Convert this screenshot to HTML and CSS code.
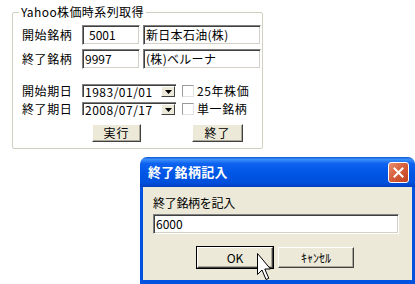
FILE: index.html
```html
<!DOCTYPE html>
<html lang="ja">
<head>
    <meta charset="UTF-8">
    <title>Yahoo株価時系列取得</title>
    <link rel="stylesheet" href="styles.css">
</head>
<body>
    <div class="desk">
        <fieldset class="group">
            <legend>Yahoo株価時系列取得</legend>
            <div class="inner">
                <div class="row code-row">
                    <span class="lbl">開始銘柄</span>
                    <span class="field code indent">5001</span>
                    <span class="field name">新日本石油(株)</span>
                </div>
                <div class="row code-row second">
                    <span class="lbl">終了銘柄</span>
                    <span class="field code">9997</span>
                    <span class="field name">(株)ベルーナ</span>
                </div>
                <div class="row date-row">
                    <span class="lbl">開始期日</span>
                    <span class="combo">
                        <span class="combo-text">1983/01/01</span>
                        <span class="combo-btn"><svg width="7" height="4" viewBox="0 0 7 4"><path d="M0 0H7L3.5 4Z" fill="#000"/></svg></span>
                    </span>
                    <span class="check"></span>
                    <span class="check-lbl">25年株価</span>
                </div>
                <div class="row date-row second-date">
                    <span class="lbl">終了期日</span>
                    <span class="combo">
                        <span class="combo-text">2008/07/17</span>
                        <span class="combo-btn"><svg width="7" height="4" viewBox="0 0 7 4"><path d="M0 0H7L3.5 4Z" fill="#000"/></svg></span>
                    </span>
                    <span class="check"></span>
                    <span class="check-lbl">単一銘柄</span>
                </div>
                <div class="btn-row">
                    <button class="btn form-btn">実行</button>
                    <button class="btn form-btn quit">終了</button>
                </div>
            </div>
        </fieldset>
    </div>

    <div class="dialog">
        <div class="titlebar">
            <span class="title">終了銘柄記入</span>
            <span class="close">
                <svg width="11" height="11" viewBox="0 0 11 11"><path d="M1.5 1.5L9.5 9.5M9.5 1.5L1.5 9.5" stroke="#fff" stroke-width="2" stroke-linecap="square"/></svg>
            </span>
        </div>
        <div class="dlg-body">
            <div class="prompt">終了銘柄を記入</div>
            <div class="field dlg-input">6000</div>
            <div class="dlg-btns">
                <button class="btn dlg-btn ok">OK</button>
                <button class="btn dlg-btn">ｷｬﾝｾﾙ</button>
            </div>
        </div>
    </div>

    <svg class="cursor" width="15" height="30" viewBox="0 0 15 30">
        <path d="M0.5 0.5V21.5L5 17L9 26.5L11.8 25.3L7.8 16H13.5Z" fill="#fff" stroke="#000" stroke-width="1" stroke-linejoin="miter"/>
    </svg>
</body>
</html>
```

FILE: styles.css
```css
body {
    margin: 0;
    background: #fff;
    font-family: "Noto Sans CJK JP", "DejaVu Sans", sans-serif;
    font-size: 12px;
    color: #000;
}
.desk {
    padding: 5px 0 0 12px;
}
.group {
    width: 249px;
    margin: 0;
    padding: 0;
    border: 1px solid #d0d0bf;
    border-radius: 2px;
}
.group legend {
    margin-left: 6px;
    padding: 0 2px;
    font-size: 12px;
    line-height: 14px;
    letter-spacing: 0.4px;
}
.inner {
    padding: 6px 0 6px 9px;
}
.row {
    display: flex;
    align-items: center;
}
.lbl {
    width: 60px;
    letter-spacing: 0.6px;
    line-height: 14px;
}
.code-row {
    height: 20px;
}
.code-row.second {
    margin-top: 4px;
}
.field {
    box-sizing: border-box;
    height: 20px;
    background: #fff;
    border: 1px solid;
    border-color: #808080 #fff #fff #808080;
    box-shadow: inset 1px 1px #404040, inset -1px -1px #d4d0c8;
    line-height: 18px;
    padding-left: 2px;
    white-space: nowrap;
    overflow: hidden;
}
.code {
    width: 58px;
    margin-right: 3px;
}
.indent {
    padding-left: 6px;
}
.name {
    width: 118px;
    letter-spacing: 0.3px;
}
.date-row {
    margin-top: 15px;
    height: 13px;
}
.date-row.second-date {
    margin-top: 5px;
}
.combo {
    box-sizing: border-box;
    width: 94px;
    height: 13px;
    display: flex;
    align-items: center;
    justify-content: space-between;
    background: #fff;
    border-top: 1px solid #808080;
    border-left: 1px solid #808080;
    box-shadow: inset 1px 1px #404040;
    padding: 1px 1px 0 2px;
}
.combo-text {
    line-height: 12px;
    font-size: 12px;
    letter-spacing: 0.5px;
}
.combo-btn {
    box-sizing: border-box;
    width: 14px;
    height: 11px;
    display: flex;
    align-items: center;
    justify-content: center;
    background: #ece9d8;
    border: 1px solid;
    border-color: #fff #404040 #404040 #fff;
}
.check {
    box-sizing: border-box;
    width: 12px;
    height: 12px;
    margin-left: 6px;
    background: #fff;
    border: 1px solid;
    border-color: #9a9a9a #e2e2e2 #e2e2e2 #9a9a9a;
}
.check-lbl {
    margin-left: 3px;
    letter-spacing: 0.6px;
    line-height: 14px;
}
.btn-row {
    display: flex;
    margin-top: 9px;
    padding-left: 70px;
}
.btn {
    box-sizing: border-box;
    font-family: "Noto Sans CJK JP", "DejaVu Sans", sans-serif;
    font-size: 12px;
    color: #000;
    background: #ece9d8;
    border: 1px solid;
    border-color: #fff #404040 #404040 #fff;
    box-shadow: inset -1px -1px #aca899;
    padding: 0;
    line-height: 14px;
}
.form-btn {
    width: 49px;
    height: 18px;
    letter-spacing: 1px;
}
.form-btn.quit {
    width: 51px;
    margin-left: 51px;
}

.dialog {
    position: absolute;
    left: 140px;
    top: 157px;
    width: 275px;
    height: 127px;
    display: flex;
    flex-direction: column;
}
.titlebar {
    height: 30px;
    display: flex;
    align-items: center;
    justify-content: space-between;
    padding: 0 6px 0 8px;
    border-radius: 7px 7px 0 0;
    background: linear-gradient(to bottom, #0a58d6 0%, #3d8ff9 8%, #0d63f0 22%, #0055e5 55%, #0050dc 85%, #003fc0 100%);
}
.title {
    color: #fff;
    font-weight: bold;
    font-size: 13px;
    line-height: 16px;
    letter-spacing: 0.3px;
}
.close {
    box-sizing: border-box;
    width: 21px;
    height: 21px;
    display: flex;
    align-items: center;
    justify-content: center;
    border: 1px solid #fff;
    border-radius: 3px;
    background: linear-gradient(135deg, #e8906f 0%, #d6603d 45%, #c0401f 100%);
}
.dlg-body {
    flex: 1;
    background: #ece9d8;
    border: 3px solid #0052df;
    border-top: none;
    border-bottom-width: 4px;
    padding: 9px 0 0 10px;
}
.prompt {
    line-height: 14px;
    letter-spacing: -0.3px;
}
.dlg-input {
    width: 246px;
    margin-top: 4px;
    letter-spacing: 0;
}
.dlg-btns {
    display: flex;
    gap: 5px;
    margin-top: 13px;
    padding-left: 44px;
}
.dlg-btn {
    width: 76px;
    height: 21px;
}
.dlg-btn.ok {
    outline: 1px solid #000;
    outline-offset: 0;
}
.cursor {
    position: absolute;
    left: 257px;
    top: 253px;
}
```
